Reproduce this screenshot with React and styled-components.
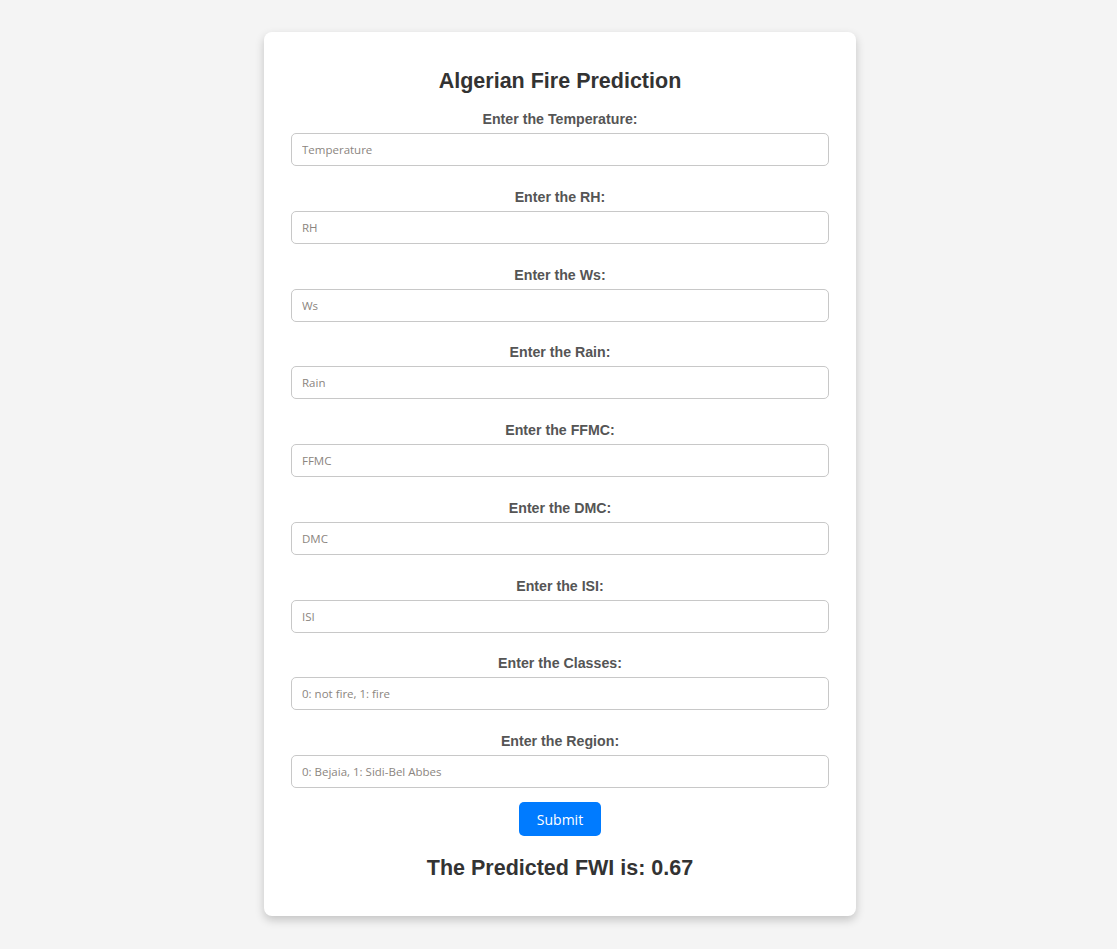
import styled, { createGlobalStyle } from "styled-components";

const GlobalStyle = createGlobalStyle`
  body {
    margin: 0;
    background: #f4f4f4;
    font-family: "Liberation Sans", Arial, sans-serif;
  }
`;

const Page = styled.main`
  display: flex;
  justify-content: center;
  padding: 32px 0 33px 3px;
`;

const Card = styled.form`
  width: 592px;
  box-sizing: border-box;
  background: #fff;
  border-radius: 8px;
  box-shadow: 0 4px 10px rgba(0, 0, 0, 0.2);
  padding: 35px 27px 35px;
  display: flex;
  flex-direction: column;
  align-items: stretch;
`;

const Titulo = styled.h1`
  margin: 0 0 15px;
  font-size: 21.5px;
  line-height: 28px;
  font-weight: bold;
  text-align: center;
  color: #333;
`;

const Campo = styled.div`
  display: flex;
  flex-direction: column;
  margin-bottom: ${(props) => (props.$ultimo ? "14px" : "21.75px")};
`;

const Rotulo = styled.label`
  font-size: 14.2px;
  line-height: 18px;
  font-weight: bold;
  color: #555;
  text-align: center;
  margin-bottom: 5px;
`;

const Entrada = styled.input`
  box-sizing: border-box;
  height: 33px;
  width: 100%;
  border: 1px solid #c8c8c8;
  border-radius: 5px;
  padding: 0 10px;
  font-family: "Open Sans", "DejaVu Sans", sans-serif;
  font-size: 11.5px;
  color: #333;

  &::placeholder {
    color: #8b8580;
  }
`;

const Botao = styled.button`
  align-self: center;
  width: 82px;
  height: 34px;
  border: none;
  border-radius: 5px;
  background: #007bff;
  color: #fff;
  font-family: "Open Sans", "DejaVu Sans", sans-serif;
  font-size: 14px;
  cursor: pointer;
`;

const Resultado = styled.h2`
  margin: 19px 0 0;
  font-size: 21.5px;
  line-height: 26px;
  font-weight: bold;
  text-align: center;
  color: #333;
`;

const campos = [
  { nome: "Temperature", placeholder: "Temperature" },
  { nome: "RH", placeholder: "RH" },
  { nome: "Ws", placeholder: "Ws" },
  { nome: "Rain", placeholder: "Rain" },
  { nome: "FFMC", placeholder: "FFMC" },
  { nome: "DMC", placeholder: "DMC" },
  { nome: "ISI", placeholder: "ISI" },
  { nome: "Classes", placeholder: "0: not fire, 1: fire" },
  { nome: "Region", placeholder: "0: Bejaia, 1: Sidi-Bel Abbes" },
];

export default function App() {
  return (
    <>
      <GlobalStyle />
      <Page>
        <Card onSubmit={(evento) => evento.preventDefault()}>
          <Titulo>Algerian Fire Prediction</Titulo>
          {campos.map((campo, i) => (
            <Campo key={campo.nome} $ultimo={i === campos.length - 1}>
              <Rotulo htmlFor={campo.nome}>Enter the {campo.nome}:</Rotulo>
              <Entrada
                id={campo.nome}
                name={campo.nome}
                placeholder={campo.placeholder}
              />
            </Campo>
          ))}
          <Botao type="submit">Submit</Botao>
          <Resultado>The Predicted FWI is: 0.67</Resultado>
        </Card>
      </Page>
    </>
  );
}
